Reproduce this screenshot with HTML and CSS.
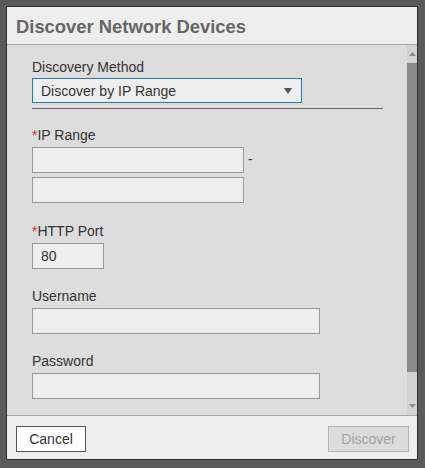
FILE: index.html
```html
<!DOCTYPE html>
<html>
<head>
<meta charset="utf-8">
<title>Discover Network Devices</title>
<link rel="stylesheet" href="styles.css">
</head>
<body>
<div class="frame">
  <div class="dialog">
    <div class="header">
      <h1 class="title">Discover Network Devices</h1>
    </div>
    <div class="main">
      <div class="content">
        <div class="field">
          <label class="label">Discovery Method</label>
          <div class="select">
            <span>Discover by IP Range</span>
            <svg class="caret" width="8" height="6" viewBox="0 0 8 6"><path d="M0 0H8L4 6Z" fill="#555"/></svg>
          </div>
        </div>
        <div class="divider"></div>
        <div class="field f-ip">
          <label class="label"><span class="req">*</span>IP Range</label>
          <div class="row">
            <input class="input w-ip" type="text">
            <span class="dash">-</span>
          </div>
          <input class="input w-ip second" type="text">
        </div>
        <div class="field f-port">
          <label class="label"><span class="req">*</span>HTTP Port</label>
          <input class="input w-port" type="text" value="80">
        </div>
        <div class="field f-user">
          <label class="label">Username</label>
          <input class="input w-wide" type="text">
        </div>
        <div class="field f-user">
          <label class="label">Password</label>
          <input class="input w-wide" type="password">
        </div>
      </div>
      <div class="scrollbar">
        <div class="sb-btn"><svg width="7" height="4" viewBox="0 0 7 4"><path d="M3.5 0L7 4H0Z" fill="#8a8a8a"/></svg></div>
        <div class="sb-thumb"></div>
        <div class="sb-track"></div>
        <div class="sb-btn"><svg width="7" height="4" viewBox="0 0 7 4"><path d="M0 0H7L3.5 4Z" fill="#8a8a8a"/></svg></div>
      </div>
    </div>
    <div class="footer">
      <button class="btn btn-cancel">Cancel</button>
      <button class="btn btn-discover" disabled>Discover</button>
    </div>
  </div>
</div>
</body>
</html>
```
FILE: styles.css
```css
html, body {
  margin: 0;
  padding: 0;
}
body {
  background: #5a5a5a;
  font-family: "Liberation Sans", Arial, sans-serif;
  color: #333;
}
.frame {
  box-sizing: border-box;
  width: 425px;
  height: 468px;
  padding: 6px 7px 8px 6px;
  display: flex;
}
.dialog {
  flex: 1;
  border: 1px solid #2e2e2e;
  display: flex;
  flex-direction: column;
  background: #dddddd;
  min-width: 0;
}
.header {
  flex: none;
  box-sizing: content-box;
  height: 27px;
  padding: 10px 0 0 9px;
  background: #eeeeee;
  border-bottom: 1px solid #a8a8a8;
}
.title {
  margin: 0;
  font-size: 18.4px;
  line-height: 20px;
  font-weight: bold;
  color: #666666;
}
.main {
  flex: 1;
  display: flex;
  min-height: 0;
}
.content {
  flex: 1;
  padding: 14px 24px 0 25px;
  overflow: hidden;
}
.field {
  display: flex;
  flex-direction: column;
  align-items: flex-start;
}
.label {
  display: block;
  font-size: 14px;
  line-height: 16px;
  color: #333;
}
.req {
  color: #d52b25;
}
.select {
  box-sizing: border-box;
  width: 270px;
  height: 25px;
  margin-top: 3px;
  border: 1px solid #1b7cc0;
  background: #eeeeee;
  padding: 0 9px 0 8px;
  display: flex;
  align-items: center;
  justify-content: space-between;
  font-size: 14px;
  color: #333;
}
.caret {
  display: block;
}
.divider {
  height: 1px;
  background: #666666;
  margin-top: 5px;
}
.f-ip {
  margin-top: 18px;
}
.f-port {
  margin-top: 20px;
}
.f-user {
  margin-top: 19px;
}
.row {
  display: flex;
  align-items: center;
  margin-top: 4px;
}
.input {
  box-sizing: border-box;
  height: 26px;
  margin: 4px 0 0 0;
  border: 1px solid #999999;
  background: #eeeeee;
  padding: 0 8px;
  font-family: inherit;
  font-size: 14px;
  color: #333;
  outline: none;
  border-radius: 0;
}
.row .input {
  margin-top: 0;
}
.w-ip {
  width: 212px;
}
.w-port {
  width: 72px;
}
.w-wide {
  width: 288px;
}
.dash {
  margin-left: 4px;
  font-size: 14px;
  line-height: 16px;
  color: #333;
  position: relative;
  top: -1px;
}
.scrollbar {
  width: 10px;
  flex: none;
  background: #d3d3d3;
  display: flex;
  flex-direction: column;
}
.sb-btn {
  height: 18px;
  flex: none;
  display: flex;
  align-items: center;
  justify-content: center;
}
.sb-btn svg {
  display: block;
}
.sb-thumb {
  height: 309px;
  flex: none;
  background: #8a8a8a;
}
.sb-track {
  flex: 1;
}
.footer {
  flex: none;
  box-sizing: border-box;
  height: 44px;
  border-top: 1px solid #aaaaaa;
  background: #eeeeee;
  display: flex;
  justify-content: space-between;
  align-items: flex-start;
  padding: 10px 8px 0 9px;
}
.btn {
  box-sizing: border-box;
  height: 26px;
  padding: 0;
  font-family: inherit;
  font-size: 14px;
  border-radius: 0;
}
.btn-cancel {
  width: 70px;
  background: #ffffff;
  border: 1px solid #555555;
  color: #333;
}
.btn-discover {
  width: 81px;
  background: #dcdcdc;
  border: 1px solid #b3b3b3;
  color: #a3a3a3;
}
```
